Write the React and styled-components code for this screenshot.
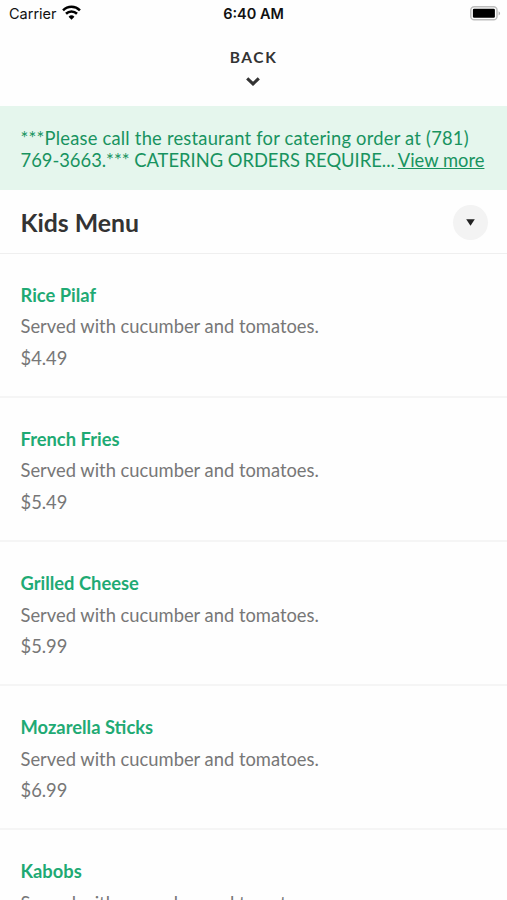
import React from "react";
import styled, { createGlobalStyle } from "styled-components";

const items = [
  { name: "Rice Pilaf", price: "$4.49" },
  { name: "French Fries", price: "$5.49" },
  { name: "Grilled Cheese", price: "$5.99" },
  { name: "Mozarella Sticks", price: "$6.99" },
  { name: "Kabobs" },
];

function App() {
  return (
    <>
      <GlobalStyle />
      <Screen>
        <StatusBar>
          <Carrier>
            Carrier
            <WifiIcon viewBox="0 0 18 14">
              <path d="M1 4.9a11.4 11.4 0 0 1 16 0" />
              <path d="M3.8 8.2a7.4 7.4 0 0 1 10.4 0" />
              <path d="M9 13.8 6.2 11a4 4 0 0 1 5.6 0Z" fill="#000" stroke="none" />
            </WifiIcon>
          </Carrier>
          <Clock>6:40 AM</Clock>
          <BatteryIcon viewBox="0 0 31 15">
            <rect x="0.8" y="0.8" width="26.2" height="13" rx="3.4" fill="#fff" stroke="#bdbdbd" strokeWidth="1.5" />
            <rect x="2.9" y="2.8" width="22" height="9" rx="1.2" fill="#000" />
            <path d="M28.6 5.2c2 .8 2 3.4 0 4.2Z" fill="#b0b0b0" />
          </BatteryIcon>
        </StatusBar>
        <BackButton>
          BACK
          <ChevronIcon viewBox="0 0 14 9">
            <path d="M1.2 1.4 7 6.9l5.8-5.5" />
          </ChevronIcon>
        </BackButton>
        <Notice>
          <NoticeLead>***Please call the restaurant for catering order at (781)</NoticeLead>
          <NoticeRow>
            <span>769-3663.*** CATERING ORDERS REQUIRE...</span>
            <ViewMore>View more</ViewMore>
          </NoticeRow>
        </Notice>
        <SectionHeader>
          <SectionTitle>Kids Menu</SectionTitle>
          <Toggle aria-label="Choose section">
            <Caret viewBox="0 0 9 7">
              <path d="M0.2 0.3h8.6L4.5 6.8Z" />
            </Caret>
          </Toggle>
        </SectionHeader>
        {items.map((item) => (
          <MenuItem key={item.name}>
            <ItemName>{item.name}</ItemName>
            <ItemText>Served with cucumber and tomatoes.</ItemText>
            {item.price && <ItemText>{item.price}</ItemText>}
          </MenuItem>
        ))}
      </Screen>
    </>
  );
}

const GlobalStyle = createGlobalStyle`
  body {
    margin: 0;
    overflow: hidden;
    background: #fefefe;
  }
  * {
    box-sizing: border-box;
  }
`;

const Screen = styled.main`
  height: 900px;
  overflow: hidden;
  font-family: Lato, sans-serif;
  font-size: 18.35px;
  color: #333;
`;

const StatusBar = styled.header`
  display: grid;
  grid-template-columns: 1fr auto 1fr;
  align-items: center;
  height: 27px;
  padding: 0 7px 0 9px;
  font-family: Inter, sans-serif;
  font-size: 14.5px;
  color: #111;
`;

const Carrier = styled.div`
  display: flex;
  align-items: center;
  gap: 5px;
`;

const WifiIcon = styled.svg`
  width: 19px;
  height: 15px;
  margin-top: -2px;
  fill: none;
  stroke: #000;
  stroke-width: 2.4;
`;

const Clock = styled.div`
  margin-right: 2px;
  font-weight: 600;
`;

const BatteryIcon = styled.svg`
  width: 31px;
  height: 15px;
  margin-right: -1px;
  justify-self: end;
`;

const BackButton = styled.button`
  display: flex;
  flex-direction: column;
  align-items: center;
  width: 100%;
  height: 79px;
  padding: 20px 0 0;
  border: none;
  background: none;
  font-family: inherit;
  font-size: 15.5px;
  font-weight: 700;
  line-height: 20px;
  letter-spacing: 1.6px;
  color: #333;
`;

const ChevronIcon = styled.svg`
  width: 14px;
  height: 9px;
  margin: 10px 1px 0 0;
  fill: none;
  stroke: #333;
  stroke-width: 3.1;
`;

const Notice = styled.section`
  height: 84px;
  padding: 21px 20.5px 0;
  background: #e5f6ed;
  line-height: 22px;
  color: #18935f;
  white-space: nowrap;
`;

const NoticeLead = styled.div`
  letter-spacing: 0.22px;
`;

const NoticeRow = styled.div`
  display: flex;
  gap: 3px;
`;

const ViewMore = styled.a`
  text-decoration: underline;
`;

const SectionHeader = styled.div`
  display: flex;
  align-items: center;
  justify-content: space-between;
  height: 63.6px;
  padding: 0 19px 0 20.5px;
  border-bottom: 1px solid #efefef;
`;

const SectionTitle = styled.h1`
  margin: 2px 0 0;
  font-size: 24.8px;
  font-weight: 700;
`;

const Toggle = styled.button`
  display: flex;
  align-items: center;
  justify-content: center;
  width: 35px;
  height: 35px;
  margin-top: 2px;
  padding: 0;
  border: none;
  border-radius: 50%;
  background: #f3f3f3;
`;

const Caret = styled.svg`
  width: 9px;
  height: 7px;
  fill: #222;
`;

const MenuItem = styled.article`
  height: 144.2px;
  padding: 26px 20.5px 0;
  border-bottom: 2px solid #f5f5f5;
  line-height: 31.6px;
`;

const ItemName = styled.h2`
  margin: 0;
  font-size: 18.35px;
  font-weight: 700;
  color: #1faa74;
`;

const ItemText = styled.p`
  margin: 0;
  color: #777;
`;

export default App;
